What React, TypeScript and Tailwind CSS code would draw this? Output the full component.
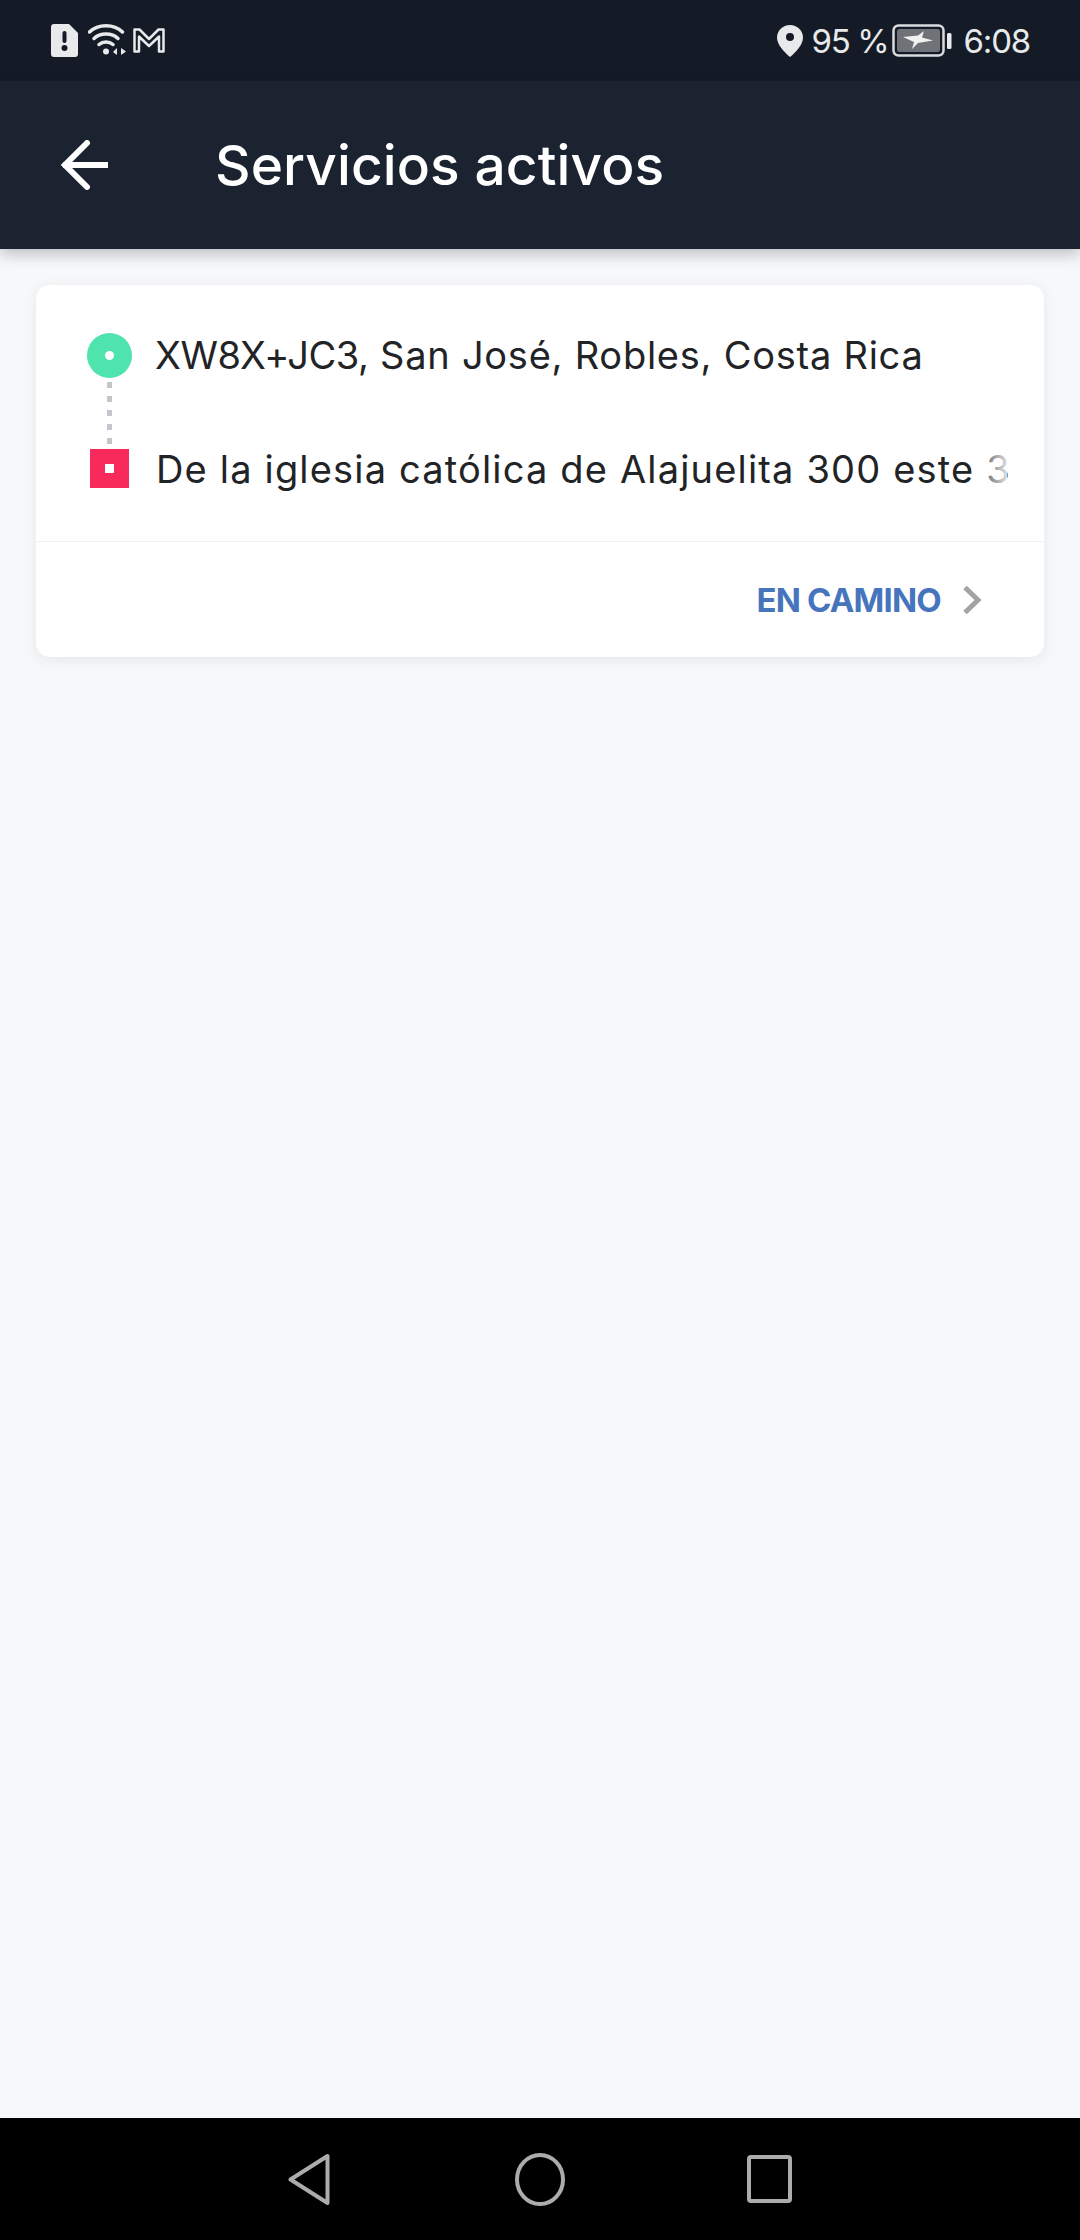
import React from "react";

const font = "font-['Inter','Noto_Sans',sans-serif]";

const StatusBar = () => (
  <div className="flex h-[81px] shrink-0 items-center justify-between bg-[#141b26] pl-[51px] pr-[50px] text-[#e8e9eb]">
    <div className="flex items-center">
      {/* sim alert */}
      <svg width="27" height="33" viewBox="0 0 27 33" className="mt-[-1px]">
        <path d="M3 0H18L27 9V30a3 3 0 0 1-3 3H3a3 3 0 0 1-3-3V3a3 3 0 0 1 3-3Z" fill="#e8e9eb" />
        <rect x="11.500" y="7" width="4" height="12" rx="2" fill="#141b26" />
        <circle cx="13.500" cy="24" r="3" fill="#141b26" />
      </svg>
      {/* wifi */}
      <svg width="38" height="33" viewBox="0 0 38 33" className="ml-[10px] mt-[-2px]" fill="none">
        <path d="M1.500 9C10 0.500 26 0.500 34.500 9" stroke="#e8e9eb" strokeWidth="3.500" strokeLinecap="round" />
        <path d="M6 15.500C12 9.500 24 9.500 30 15.500" stroke="#e8e9eb" strokeWidth="3.500" strokeLinecap="round" />
        <path d="M11 21.500C15 18 21 18 25 21.500" stroke="#e8e9eb" strokeWidth="3.500" strokeLinecap="round" />
        <circle cx="18" cy="28.500" r="3" fill="#e8e9eb" />
        <path d="M29 25V32L25 29Z" fill="#e8e9eb" />
        <path d="M33 25V32L38 28.500Z" fill="#e8e9eb" />
      </svg>
      {/* m notification */}
      <svg width="32" height="25" viewBox="0 0 32 25" className="ml-[7px]" fill="none">
        <path
          d="M1.500 23.500V1.500H6.500L16 11L25.500 1.500H30.500V23.500H26V8.500L16 18L6 8.500V23.500Z"
          stroke="#e8e9eb"
          strokeWidth="2.500"
          strokeLinejoin="round"
        />
      </svg>
    </div>
    <div className="flex items-center">
      {/* location pin */}
      <svg width="26" height="32" viewBox="0 0 26 32">
        <path
          d="M13 0C5.800 0 0 5.600 0 12.700C0 19.500 7.500 27.500 13 32C18.500 27.500 26 19.500 26 12.700C26 5.600 20.200 0 13 0Z"
          fill="#e8e9eb"
        />
        <circle cx="13" cy="12" r="4" fill="#141b26" />
      </svg>
      <span className="ml-[9px] w-[73px] whitespace-nowrap text-[33px] leading-[38px] tracking-[-1.4px] text-[#e8e9eb]">95 %</span>
      {/* charging battery */}
      <svg width="60" height="33" viewBox="0 0 60 33" className="ml-[7px]" fill="none">
        <rect x="1.500" y="1.500" width="50" height="30" rx="5" stroke="#d9dbde" strokeWidth="2.500" />
        <rect x="5" y="5" width="43" height="23" rx="2.500" fill="#6f7277" />
        <path d="M11 13L26 11.500L32 7L30 13.500L41 16.500L26 19L20 25L22 18Z" fill="#f1f1f1" />
        <rect x="55" y="9" width="4.500" height="16" rx="1.500" fill="#e8e9eb" />
      </svg>
      <span className="ml-[12px] text-[33px] leading-[38px] tracking-[-1.2px] text-[#e8e9eb]">6:08</span>
    </div>
  </div>
);

const AppBar = () => (
  <div className="relative z-10 flex h-[168px] shrink-0 items-center bg-[#1c2330] pl-[60px] shadow-[0_5px_14px_rgba(30,35,45,0.28)]">
    <svg width="50" height="50" viewBox="0 0 50 50" fill="none" className="mt-[-1px]">
      <path d="M48 25H3" stroke="#fff" strokeWidth="6" />
      <path d="M27 3L5 25L27 47" stroke="#fff" strokeWidth="6" strokeLinecap="round" />
    </svg>
    <div className="ml-[105px] text-[55px] font-medium leading-[64px] tracking-[0.1px] text-white">Servicios activos</div>
  </div>
);

const RouteCard = () => (
  <div className="overflow-hidden rounded-[14px] bg-white shadow-[0_3px_14px_rgba(40,50,70,0.09)]">
    <div className="flex h-[257px] border-b border-[#f0f1f3] pl-[51px]">
      <div className="flex w-[45px] flex-col items-center pt-[48px]">
        <div className="flex h-[45px] w-[45px] items-center justify-center rounded-full bg-[#4fe3ae]">
          <div className="h-[9px] w-[9px] rounded-full bg-white" />
        </div>
        <div className="mt-[4px] flex h-[65px] flex-col gap-[8px]">
          {[0, 1, 2, 3, 4].map((i) => (
            <div key={i} className="h-[6px] w-[5px] bg-[#c4c6cc]" />
          ))}
        </div>
        <div className="mt-[2px] flex h-[39px] w-[39px] items-center justify-center bg-[#f72a5b]">
          <div className="h-[9px] w-[9px] bg-white" />
        </div>
      </div>
      <div className="relative ml-[23px] w-[860px] whitespace-nowrap text-[38px] leading-[44px] text-[#222326]">
        <div className="mt-[48px] tracking-[0.75px]">
          <span className="tracking-[-0.4px]">XW8X+JC3,</span> San José, Robles, Costa Rica
        </div>
        <div className="ml-[1px] mt-[70px] tracking-[1.17px]">De la iglesia católica de Alajuelita 300 este 3</div>
        {/* last digit fades out at the card's text edge */}
        <div className="absolute right-[8px] top-[155px] h-[56px] w-[26px] bg-linear-to-r from-white/25 to-white/85" />
      </div>
    </div>
    <div className="flex h-[115px] items-center justify-end pr-[62px]">
      <span className="text-[33px] font-bold leading-[38px] tracking-[-0.8px] text-[#4674bd]">EN CAMINO</span>
      <svg width="20" height="30" viewBox="0 0 20 30" fill="none" className="ml-[21px]">
        <path d="M3 2.500L16 15L3 27.500" stroke="#a3a3a3" strokeWidth="5" />
      </svg>
    </div>
  </div>
);

const NavBar = () => (
  <div className="flex h-[122px] shrink-0 items-center justify-center bg-black">
    <svg width="42" height="53" viewBox="0 0 42 53" fill="none">
      <path d="M2.500 26.500L39.500 3V50Z" stroke="#acacac" strokeWidth="4" strokeLinejoin="round" />
    </svg>
    <svg width="50" height="53" viewBox="0 0 50 53" fill="none" className="ml-[185px]">
      <ellipse cx="25" cy="26.500" rx="23" ry="24.500" stroke="#acacac" strokeWidth="4" />
    </svg>
    <svg width="45" height="48" viewBox="0 0 45 48" fill="none" className="ml-[182px]">
      <rect x="2" y="2" width="41" height="44" rx="2" stroke="#acacac" strokeWidth="4" />
    </svg>
  </div>
);

export default function App() {
  return (
    <div className={`flex h-[2240px] w-[1080px] flex-col overflow-hidden bg-[#f7f8fa] ${font}`}>
      <StatusBar />
      <AppBar />
      <main className="flex-1 px-[36px] pt-[36px]">
        <RouteCard />
      </main>
      <NavBar />
    </div>
  );
}
